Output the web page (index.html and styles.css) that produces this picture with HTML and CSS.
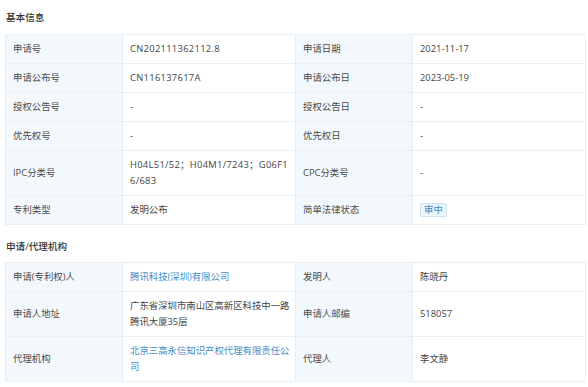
FILE: index.html
```html
<!DOCTYPE html>
<html lang="zh-CN">
<head>
<meta charset="utf-8">
<title>专利信息</title>
<link rel="stylesheet" href="styles.css">
</head>
<body>
<div class="page">
  <section class="section first">
    <h2 class="section-title">基本信息</h2>
    <table class="info">
      <colgroup><col class="c-label"><col class="c-value"><col class="c-label"><col class="c-value"></colgroup>
      <tr><th>申请号</th><td class="code">CN202111362112.8</td><th>申请日期</th><td>2021-11-17</td></tr>
      <tr><th>申请公布号</th><td class="code">CN116137617A</td><th>申请公布日</th><td>2023-05-19</td></tr>
      <tr><th>授权公告号</th><td>-</td><th>授权公告日</th><td>-</td></tr>
      <tr><th>优先权号</th><td>-</td><th>优先权日</th><td>-</td></tr>
      <tr><th>IPC分类号</th><td class="brk">H04L51/52；H04M1/7243；G06F16/683</td><th>CPC分类号</th><td>-</td></tr>
      <tr><th>专利类型</th><td>发明公布</td><th>简单法律状态</th><td><span class="tag">审中</span></td></tr>
    </table>
  </section>
  <section class="section second">
    <h2 class="section-title">申请/代理机构</h2>
    <table class="info">
      <colgroup><col class="c-label"><col class="c-value"><col class="c-label"><col class="c-value"></colgroup>
      <tr><th>申请(专利权)人</th><td><a class="link" href="#">腾讯科技(深圳)有限公司</a></td><th>发明人</th><td>陈晓丹</td></tr>
      <tr><th>申请人地址</th><td>广东省深圳市南山区高新区科技中一路腾讯大厦35层</td><th>申请人邮编</th><td>518057</td></tr>
      <tr><th>代理机构</th><td><a class="link" href="#">北京三高永信知识产权代理有限责任公司</a></td><th>代理人</th><td>李文静</td></tr>
    </table>
  </section>
</div>
</body>
</html>
```

FILE: styles.css
```css
html, body {
  margin: 0;
  padding: 0;
  background: #ffffff;
}
body {
  font-family: "Open Sans", "Noto Sans CJK SC", sans-serif;
  font-size: 9.4px;
  line-height: 16px;
  color: #444444;
}
.page {
  padding: 0 3px 0 5px;
}
.section.first {
  padding-top: 10px;
}
.section.second {
  padding-top: 14px;
}
.section-title {
  margin: 0 0 8px 1px;
  font-size: 9.6px;
  font-weight: 500;
  line-height: 16px;
  color: #333333;
}
.section.second .section-title {
  margin-bottom: 7px;
}
.info {
  width: 580px;
  table-layout: fixed;
  border-collapse: collapse;
}
.c-label { width: 117px; }
.c-value { width: 173px; }
.info th,
.info td {
  border: 1px solid #e9eef4;
  padding: 6px 4px 6px 7px;
  text-align: left;
  vertical-align: middle;
  font-weight: normal;
}
.info th {
  background: #f3f8fd;
  color: #4a4a4a;
}
.info td {
  color: #444444;
}
.code {
  letter-spacing: 0.3px;
}
.brk {
  word-break: break-all;
  letter-spacing: 0.3px;
}
.link {
  color: #3f8dcb;
  text-decoration: none;
}
.tag {
  display: inline-block;
  padding: 0 3px;
  line-height: 12px;
  color: #3b8ac4;
  background: #eef5fb;
  border: 1px solid #cfe2f1;
  border-radius: 1px;
}
```
